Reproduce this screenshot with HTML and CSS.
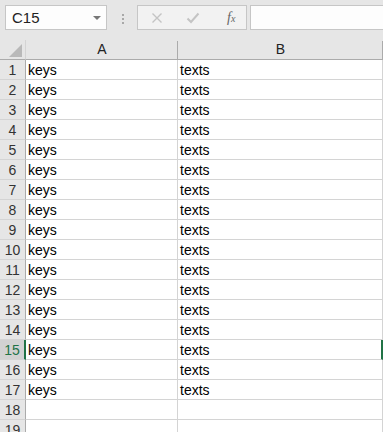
FILE: index.html
```html
<!DOCTYPE html>
<html lang="en">
<head>
    <meta charset="UTF-8">
    <title>Sheet</title>
    <link rel="stylesheet" href="styles.css">
</head>
<body>
    <div class="toolbar">
        <div class="name-box">
            <span>C15</span>
            <svg class="caret" width="8" height="5" viewBox="0 0 8 5"><path d="M0 0H8L4 4Z" fill="#777"/></svg>
        </div>
        <div class="dots"><i></i><i></i><i></i></div>
        <div class="fx-buttons">
            <svg width="12" height="12" viewBox="0 0 12 12"><path d="M1.5 1.5L10.5 10.5M10.5 1.5L1.5 10.5" stroke="#c4c4c4" stroke-width="1.4"/></svg>
            <svg width="14" height="12" viewBox="0 0 14 12"><path d="M1.5 6.5L5 10L12.5 1.5" stroke="#c4c4c4" stroke-width="2" fill="none"/></svg>
            <span class="fx">f<small>x</small></span>
        </div>
        <div class="formula-input"></div>
    </div>

    <div class="sheet">
        <div class="corner"><svg width="13" height="13" viewBox="0 0 13 13"><path d="M13 0V13H0Z" fill="#b9b9b9"/></svg></div>
        <div class="col-head">A</div>
        <div class="col-head">B</div>

        <div class="row-head">1</div><div class="cell">keys</div><div class="cell last">texts</div>
        <div class="row-head">2</div><div class="cell">keys</div><div class="cell last">texts</div>
        <div class="row-head">3</div><div class="cell">keys</div><div class="cell last">texts</div>
        <div class="row-head">4</div><div class="cell">keys</div><div class="cell last">texts</div>
        <div class="row-head">5</div><div class="cell">keys</div><div class="cell last">texts</div>
        <div class="row-head">6</div><div class="cell">keys</div><div class="cell last">texts</div>
        <div class="row-head">7</div><div class="cell">keys</div><div class="cell last">texts</div>
        <div class="row-head">8</div><div class="cell">keys</div><div class="cell last">texts</div>
        <div class="row-head">9</div><div class="cell">keys</div><div class="cell last">texts</div>
        <div class="row-head">10</div><div class="cell">keys</div><div class="cell last">texts</div>
        <div class="row-head">11</div><div class="cell">keys</div><div class="cell last">texts</div>
        <div class="row-head">12</div><div class="cell">keys</div><div class="cell last">texts</div>
        <div class="row-head">13</div><div class="cell">keys</div><div class="cell last">texts</div>
        <div class="row-head">14</div><div class="cell">keys</div><div class="cell last">texts</div>
        <div class="row-head active">15</div><div class="cell">keys</div><div class="cell last selected">texts</div>
        <div class="row-head">16</div><div class="cell">keys</div><div class="cell last">texts</div>
        <div class="row-head">17</div><div class="cell">keys</div><div class="cell last">texts</div>
        <div class="row-head">18</div><div class="cell"></div><div class="cell last"></div>
        <div class="row-head">19</div><div class="cell"></div><div class="cell last"></div>
    </div>
</body>
</html>
```

FILE: styles.css
```css
body {
    margin: 0;
    width: 383px;
    height: 432px;
    overflow: hidden;
    background-color: #e6e6e6;
    font-family: "Liberation Sans", Arial, sans-serif;
}

.toolbar {
    display: flex;
    align-items: flex-start;
    height: 40px;
    padding: 5px 0 0 5px;
    box-sizing: border-box;
}

.name-box {
    display: flex;
    align-items: center;
    justify-content: space-between;
    width: 102px;
    height: 25px;
    box-sizing: border-box;
    border: 1px solid #c6c6c6;
    background-color: #fdfdfd;
    padding: 0 5px 0 6px;
    font-size: 15px;
    color: #222;
}

.caret {
    margin-top: 1px;
}

.dots {
    display: flex;
    flex-direction: column;
    gap: 2px;
    margin: 9px 13px 0 15px;
}

.dots i {
    width: 2px;
    height: 2px;
    background-color: #a8a8a8;
}

.fx-buttons {
    display: flex;
    align-items: center;
    width: 110px;
    height: 25px;
    box-sizing: border-box;
    border: 1px solid #c6c6c6;
    background-color: #f2f2f2;
    padding: 0 0 0 13px;
    gap: 23px;
}

.fx-buttons svg:nth-child(2) {
    margin-left: 0;
}

.fx {
    margin-left: 4px;
    font-family: "Liberation Serif", serif;
    font-style: italic;
    font-size: 14px;
    color: #666;
}

.fx small {
    font-size: 10px;
}

.formula-input {
    flex: 1;
    height: 25px;
    box-sizing: border-box;
    margin-left: 3px;
    border: 1px solid #c6c6c6;
    border-right: none;
    background-color: #fdfdfd;
}

.sheet {
    display: grid;
    grid-template-columns: 26px 152px 205px;
    grid-auto-rows: 20px;
    background-color: #fff;
}

.corner,
.col-head {
    background-color: #e6e6e6;
    border-bottom: 1px solid #ababab;
    box-sizing: border-box;
}

.corner {
    display: flex;
    align-items: flex-end;
    justify-content: flex-end;
    padding: 0 3px 2px 0;
    border-right: 1px solid #d4d4d4;
}

.col-head {
    position: relative;
    text-align: center;
    font-size: 14px;
    line-height: 19px;
    color: #222;
}

.col-head::after {
    content: "";
    position: absolute;
    right: 0;
    top: 1px;
    bottom: 0;
    width: 1px;
    background-color: #ababab;
}

.row-head {
    background-color: #e6e6e6;
    border-right: 1px solid #ababab;
    border-bottom: 1px solid #d4d4d4;
    box-sizing: border-box;
    text-align: center;
    font-size: 14px;
    line-height: 20px;
    color: #333;
}

.row-head.active {
    background-color: #d2d2d2;
    border-right: 2px solid #217346;
    color: #217346;
}

.cell {
    border-right: 1px solid #d4d4d4;
    border-bottom: 1px solid #d4d4d4;
    box-sizing: border-box;
    padding-left: 2px;
    font-size: 14px;
    line-height: 20px;
    color: #000;
}

.cell.selected {
    border-right: 2px solid #217346;
}
```
